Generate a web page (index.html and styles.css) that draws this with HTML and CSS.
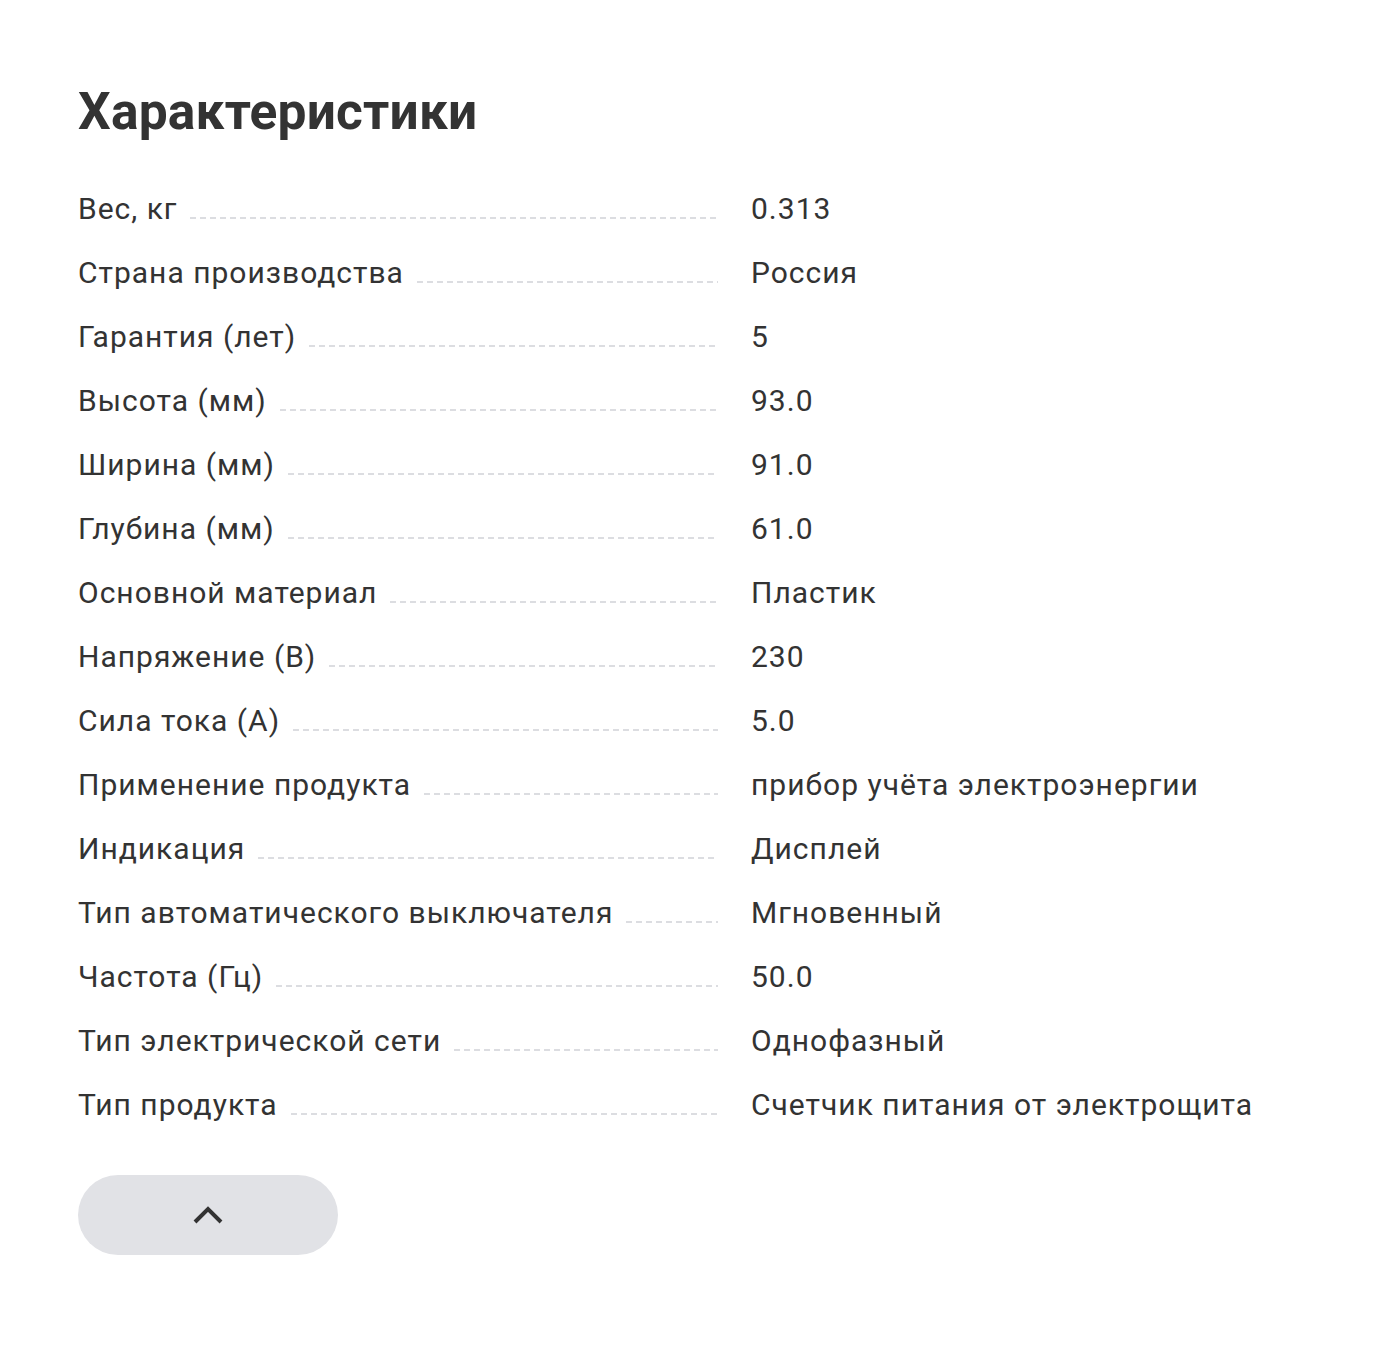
FILE: index.html
```html
<!DOCTYPE html>
<html lang="ru">
<head>
<meta charset="utf-8">
<link rel="stylesheet" href="styles.css">
</head>
<body>
<section class="specs">
  <h2 class="specs-title">Характеристики</h2>
  <dl class="specs-list">
    <div class="row"><dt><span>Вес, кг</span><i class="dots"></i></dt><dd>0.313</dd></div>
    <div class="row"><dt><span>Страна производства</span><i class="dots"></i></dt><dd>Россия</dd></div>
    <div class="row"><dt><span>Гарантия (лет)</span><i class="dots"></i></dt><dd>5</dd></div>
    <div class="row"><dt><span>Высота (мм)</span><i class="dots"></i></dt><dd>93.0</dd></div>
    <div class="row"><dt><span>Ширина (мм)</span><i class="dots"></i></dt><dd>91.0</dd></div>
    <div class="row"><dt><span>Глубина (мм)</span><i class="dots"></i></dt><dd>61.0</dd></div>
    <div class="row"><dt><span>Основной материал</span><i class="dots"></i></dt><dd>Пластик</dd></div>
    <div class="row"><dt><span>Напряжение (В)</span><i class="dots"></i></dt><dd>230</dd></div>
    <div class="row"><dt><span>Сила тока (А)</span><i class="dots"></i></dt><dd>5.0</dd></div>
    <div class="row"><dt><span>Применение продукта</span><i class="dots"></i></dt><dd>прибор учёта электроэнергии</dd></div>
    <div class="row"><dt><span>Индикация</span><i class="dots"></i></dt><dd>Дисплей</dd></div>
    <div class="row"><dt><span>Тип автоматического выключателя</span><i class="dots"></i></dt><dd>Мгновенный</dd></div>
    <div class="row"><dt><span>Частота (Гц)</span><i class="dots"></i></dt><dd>50.0</dd></div>
    <div class="row"><dt><span>Тип электрической сети</span><i class="dots"></i></dt><dd>Однофазный</dd></div>
    <div class="row"><dt><span>Тип продукта</span><i class="dots"></i></dt><dd>Счетчик питания от электрощита</dd></div>
  </dl>
  <button class="collapse" type="button" aria-label="Свернуть">
    <svg width="30" height="18" viewBox="0 0 30 18"><path d="M2 16 L15 3 L28 16" fill="none" stroke="#333" stroke-width="4"/></svg>
  </button>
</section>
</body>
</html>
```

FILE: styles.css
```css
* { box-sizing: border-box; }
body {
  margin: 0;
  background: #fff;
  font-family: Roboto, "Liberation Sans", sans-serif;
  color: #333;
}
.specs {
  padding: 80px 0 0 78px;
}
.specs-title {
  margin: 0 0 45px;
  font-size: 51.5px;
  line-height: 64px;
  font-weight: 700;
  color: #333;
  letter-spacing: 0.2px;
}
.specs-list {
  margin: 0;
  display: flex;
  flex-direction: column;
  gap: 24px;
}
.row {
  display: grid;
  grid-template-columns: 640px 1fr;
  column-gap: 33px;
  font-size: 30px;
  line-height: 40px;
  letter-spacing: 1px;
}
.row dt {
  display: flex;
  align-items: flex-end;
  white-space: nowrap;
}
.row dd {
  margin: 0;
}
.dots {
  flex: 1;
  height: 2px;
  margin: 0 0 10px 13px;
  background: repeating-linear-gradient(to right, #dcdde1 0 6px, transparent 6px 10px);
}
.collapse {
  margin-top: 50px;
  width: 260px;
  height: 80px;
  border: 0;
  border-radius: 40px;
  background: #e1e2e6;
  display: flex;
  align-items: center;
  justify-content: center;
  padding: 0;
  cursor: pointer;
}
.collapse svg { display: block; }
```
